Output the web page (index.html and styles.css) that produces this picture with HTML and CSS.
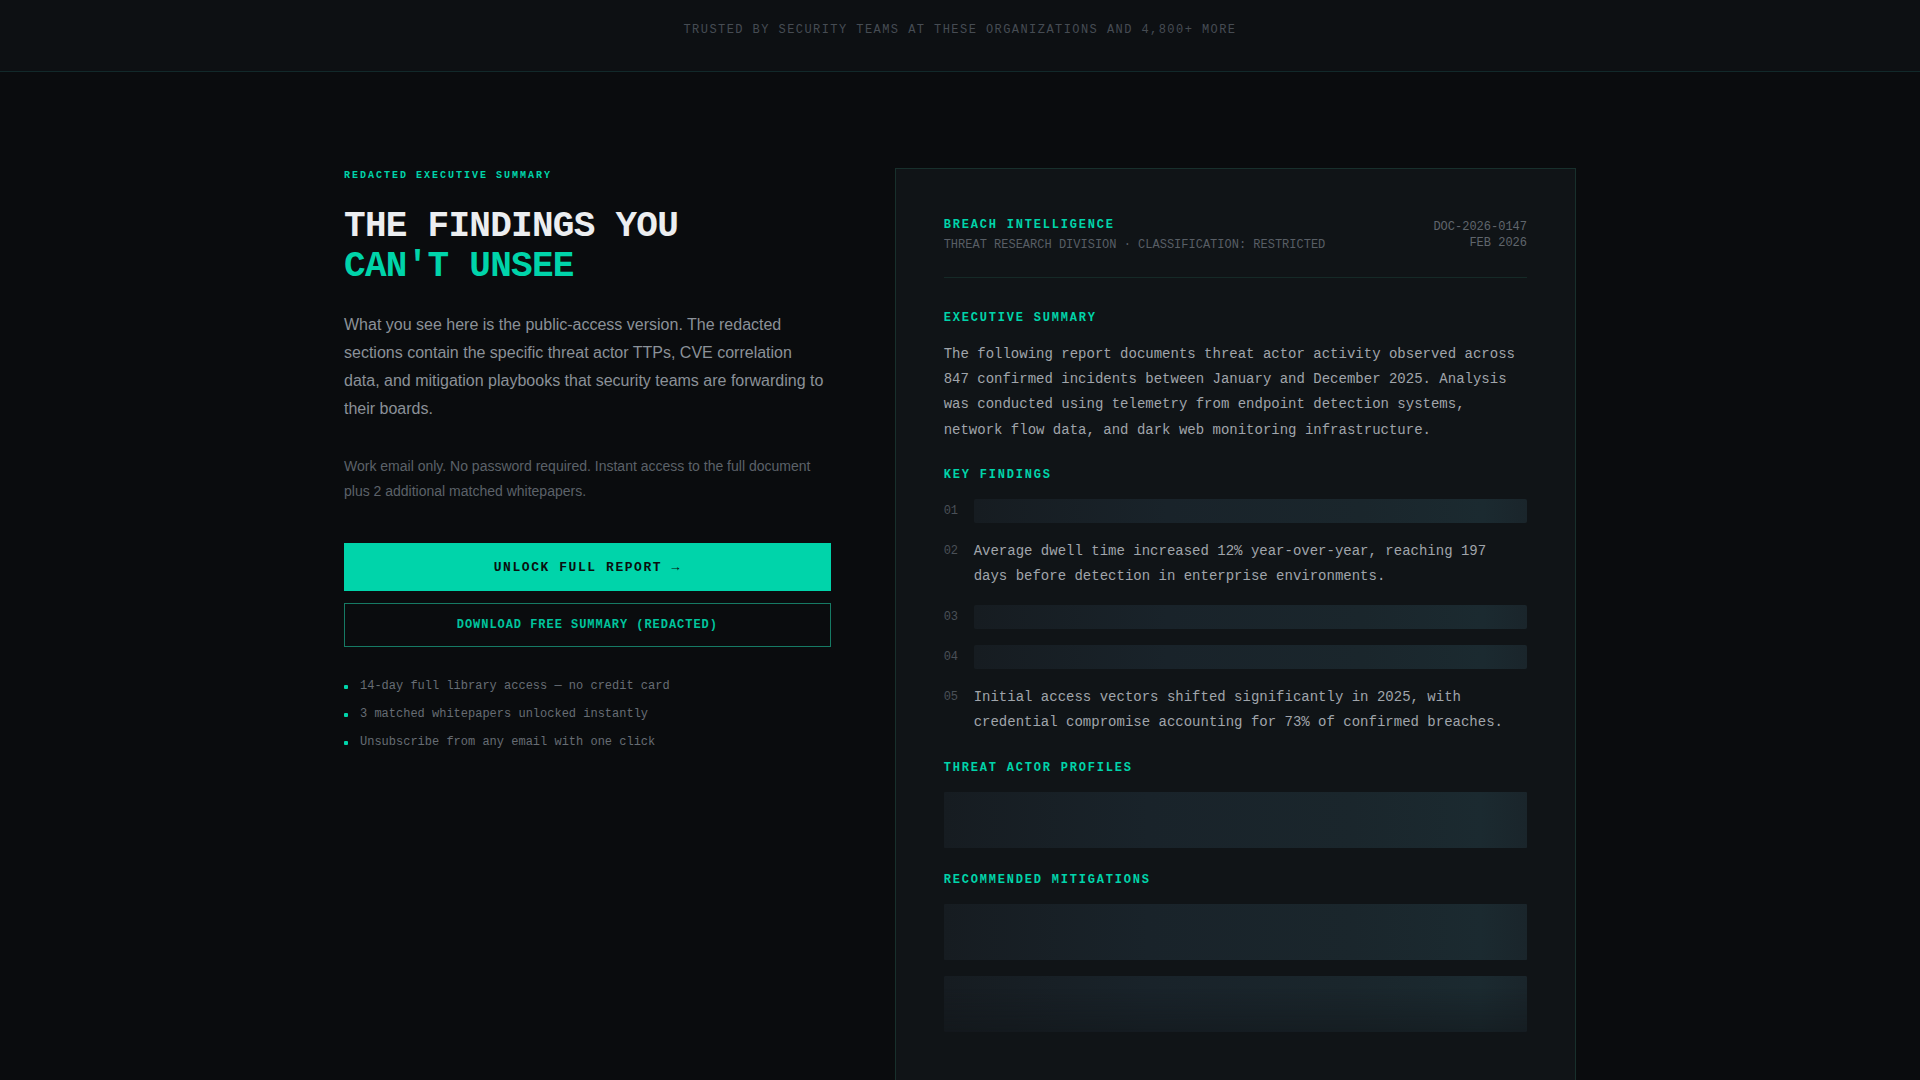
FILE: index.html
```html
<!DOCTYPE html>
<html lang="en">

<head>
  <meta charset="UTF-8">
  <meta name="viewport" content="width=device-width, initial-scale=1.0">
  <title>Breach Intelligence Report</title>
  <link rel="stylesheet" href="styles.css">
</head>

<body>
  <div class="trust-bar">
    <p class="trust-text">Trusted by security teams at these organizations and 4,800+ more</p>
  </div>

  <main class="hero">
    <section class="pitch">
      <p class="eyebrow">Redacted executive summary</p>
      <h1 class="headline">THE FINDINGS YOU<br><span class="accent">CAN'T UNSEE</span></h1>
      <p class="lead">What you see here is the public-access version. The redacted sections contain the specific threat actor TTPs, CVE correlation data, and mitigation playbooks that security teams are forwarding to their boards.</p>
      <p class="note">Work email only. No password required. Instant access to the full document plus 2 additional matched whitepapers.</p>

      <button class="btn-primary">Unlock full report &rarr;</button>
      <button class="btn-secondary">Download free summary (redacted)</button>

      <ul class="perks">
        <li>14-day full library access — no credit card</li>
        <li>3 matched whitepapers unlocked instantly</li>
        <li>Unsubscribe from any email with one click</li>
      </ul>
    </section>

    <article class="report">
      <header class="report-head">
        <div>
          <div class="report-title">Breach Intelligence</div>
          <div class="report-sub">THREAT RESEARCH DIVISION · CLASSIFICATION: RESTRICTED</div>
        </div>
        <div class="report-meta">
          <div>DOC-2026-0147</div>
          <div>FEB 2026</div>
        </div>
      </header>

      <div class="report-section first">
        <h2 class="section-title">Executive summary</h2>
        <p class="report-text">The following report documents threat actor activity observed across 847 confirmed incidents between January and December 2025. Analysis was conducted using telemetry from endpoint detection systems, network flow data, and dark web monitoring infrastructure.</p>
      </div>

      <div class="report-section">
        <h2 class="section-title">Key findings</h2>
        <ol class="findings">
          <li><span class="num">01</span><span class="redacted"></span></li>
          <li><span class="num">02</span><span class="report-text">Average dwell time increased 12% year-over-year, reaching 197 days before detection in enterprise environments.</span></li>
          <li><span class="num">03</span><span class="redacted"></span></li>
          <li><span class="num">04</span><span class="redacted"></span></li>
          <li><span class="num">05</span><span class="report-text">Initial access vectors shifted significantly in 2025, with credential compromise accounting for 73% of confirmed breaches.</span></li>
        </ol>
      </div>

      <div class="report-section">
        <h2 class="section-title">Threat actor profiles</h2>
        <div class="redacted block"></div>
      </div>

      <div class="report-section">
        <h2 class="section-title">Recommended mitigations</h2>
        <div class="redacted block"></div>
        <div class="redacted block fade"></div>
      </div>
    </article>
  </main>
</body>

</html>
```

FILE: styles.css
```css
body {
  margin: 0;
  background-color: #0a0c0e;
  color: #9ba1a7;
  font-family: 'Liberation Sans', Arial, sans-serif;
}

.trust-bar {
  height: 48px;
  padding-top: 23px;
  background-color: #0d1013;
  border-bottom: 1px solid #12292a;
}

.trust-text {
  margin: 0;
  text-align: center;
  font-family: 'Liberation Mono', monospace;
  font-size: 12px;
  line-height: 14px;
  letter-spacing: 0.12em;
  text-transform: uppercase;
  color: #464c53;
}

.hero {
  max-width: 1232px;
  margin: 0 auto;
  padding-top: 96px;
  display: grid;
  grid-template-columns: 1fr 1.4fr;
  gap: 64px;
  align-items: start;
}

/* left column */
.eyebrow {
  margin: 1px 0 24px;
  font-family: 'Liberation Mono', monospace;
  font-size: 10px;
  line-height: 14px;
  font-weight: bold;
  letter-spacing: 0.2em;
  text-transform: uppercase;
  color: #00d4aa;
}

.headline {
  margin: 0 0 24px;
  font-family: 'Liberation Mono', monospace;
  font-size: 36px;
  line-height: 40px;
  font-weight: bold;
  letter-spacing: -0.02em;
  color: #eceef0;
}

.accent {
  color: #00d4aa;
}

.lead {
  margin: 0 0 31px;
  font-size: 16px;
  line-height: 28px;
  color: #8b9198;
}

.note {
  margin: 0 0 40px;
  font-size: 14px;
  line-height: 24.5px;
  color: #5c6269;
}

.btn-primary,
.btn-secondary {
  display: block;
  width: 100%;
  font-family: 'Liberation Mono', monospace;
  font-weight: bold;
  text-transform: uppercase;
  cursor: pointer;
  border-radius: 0;
}

.btn-primary {
  height: 48px;
  border: none;
  background-color: #00d4aa;
  color: #0a0f0e;
  font-size: 13px;
  letter-spacing: 0.12em;
}

.btn-secondary {
  height: 44px;
  margin-top: 12px;
  background-color: transparent;
  border: 1px solid #167a64;
  color: #00c49d;
  font-size: 12px;
  letter-spacing: 0.08em;
}

.perks {
  list-style: none;
  margin: 25px 0 0;
  padding: 0;
  font-family: 'Liberation Mono', monospace;
  font-size: 12px;
  line-height: 28px;
  color: #676d74;
}

.perks li {
  display: flex;
  align-items: center;
  gap: 12px;
}

.perks li::before {
  content: '';
  width: 4px;
  height: 4px;
  margin-top: 2px;
  border-radius: 1px;
  background-color: #00d4aa;
}

/* report card */
.report {
  background-color: #101417;
  border: 1px solid #18302c;
  padding: 48px;
  font-family: 'Liberation Mono', monospace;
}

.report-head {
  display: flex;
  justify-content: space-between;
  align-items: flex-start;
  padding-bottom: 24px;
  border-bottom: 1px solid #152a27;
}

.report-title {
  font-size: 12px;
  line-height: 16px;
  font-weight: bold;
  letter-spacing: 0.15em;
  text-transform: uppercase;
  color: #00d4aa;
  margin-bottom: 4px;
}

.report-sub,
.report-meta {
  font-size: 12px;
  line-height: 16px;
  color: #585e65;
}

.report-meta {
  padding-top: 2px;
  text-align: right;
  line-height: 16.2px;
  color: #60666d;
}

.report-section {
  margin-top: 24px;
}

.report-section.first {
  margin-top: 32px;
}

.section-title {
  margin: 0 0 16px;
  font-size: 12px;
  line-height: 16px;
  font-weight: bold;
  letter-spacing: 0.15em;
  text-transform: uppercase;
  color: #00d4aa;
}

.report-text {
  margin: 0;
  font-size: 14px;
  line-height: 25.2px;
  color: #a0a5ab;
}

.findings {
  list-style: none;
  margin: 0;
  padding: 0;
  display: flex;
  flex-direction: column;
  gap: 16px;
}

.findings li {
  display: flex;
  align-items: flex-start;
  gap: 12px;
}

.num {
  flex: 0 0 18px;
  font-size: 12px;
  line-height: 24px;
  color: #4a5057;
}

.findings .redacted {
  flex: 1;
  height: 24px;
  border-radius: 2px;
}

.redacted {
  display: block;
  background: linear-gradient(90deg, #161c21 0%, #19232a 35%, #1a262c 70%, #1b2a30 92%, #1a252b 100%);
}

.redacted.block {
  height: 56px;
  border-radius: 1px;
}

.redacted.block + .redacted.block {
  margin-top: 16px;
}

.redacted.fade {
  -webkit-mask-image: linear-gradient(180deg, #000 20%, rgba(0, 0, 0, 0.55) 100%);
  mask-image: linear-gradient(180deg, #000 20%, rgba(0, 0, 0, 0.55) 100%);
}
```
